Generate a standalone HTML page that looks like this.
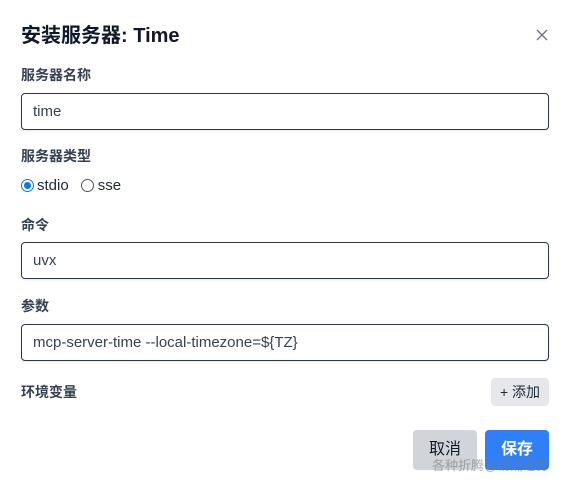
<!DOCTYPE html>
<html><head><meta charset="utf-8"><style>
*{box-sizing:border-box;margin:0;padding:0}
body{width:571px;height:491px;background:#fff;font-family:"Liberation Sans","Noto Sans CJK SC",sans-serif;color:#1f2937;position:relative;overflow:hidden}
.a{position:absolute}
.title{left:21px;font-size:20px;font-weight:bold;color:#111827}
.lbl{left:21px;font-size:14px;font-weight:bold;color:#374151}
.inp{left:21px;width:528px;height:37px;border:1px solid #2d3748;border-radius:4px;padding-left:11px;font-size:15px;line-height:35px;color:#374151;box-shadow:0 1px 2px rgba(0,0,0,.1)}
.btn{border-radius:4px;font-size:16px;text-align:center}
</style></head><body>
<div class="a title" style="top:19px">安装服务器: Time</div>
<svg class="a" style="left:535px;top:28px" width="14" height="14" viewBox="0 0 14 14"><path d="M2 2L12 12M12 2L2 12" stroke="#6b7280" stroke-width="1.3"/></svg>
<div class="a lbl" style="top:65px">服务器名称</div>
<div class="a inp" style="top:93px">time</div>
<div class="a lbl" style="top:146px">服务器类型</div>
<div class="a" style="left:21px;top:177px;font-size:15px;display:flex;align-items:center">
<span style="width:13px;height:13px;border-radius:50%;border:1px solid #0b76ef;display:inline-block;position:relative;margin-right:3px"><span style="position:absolute;left:2px;top:2px;width:7px;height:7px;border-radius:50%;background:#0b76ef"></span></span>stdio
<span style="width:13px;height:13px;border-radius:50%;border:1px solid #555;display:inline-block;margin:0 4px 0 12px"></span>sse</div>
<div class="a lbl" style="top:215px">命令</div>
<div class="a inp" style="top:242px">uvx</div>
<div class="a lbl" style="top:296px">参数</div>
<div class="a inp" style="top:324px">mcp-server-time --local-timezone=${TZ}</div>
<div class="a lbl" style="top:382px">环境变量</div>
<div class="a btn" style="left:491px;top:378px;width:58px;height:28px;background:#e5e7eb;font-size:14px;line-height:28px;color:#1f2937">+ 添加</div>
<div class="a btn" style="left:413px;top:430px;width:64px;height:40px;background:#d1d5db;line-height:40px;color:#111827">取消</div>
<div class="a btn" style="left:485px;top:430px;width:64px;height:40px;background:#2f80f8;line-height:40px;color:#fff;font-weight:bold">保存</div>
<div class="a" style="left:432px;top:455px;font-size:13px;color:rgba(120,120,120,.6)">各种折腾@杨浦老苏</div>
</body></html>
